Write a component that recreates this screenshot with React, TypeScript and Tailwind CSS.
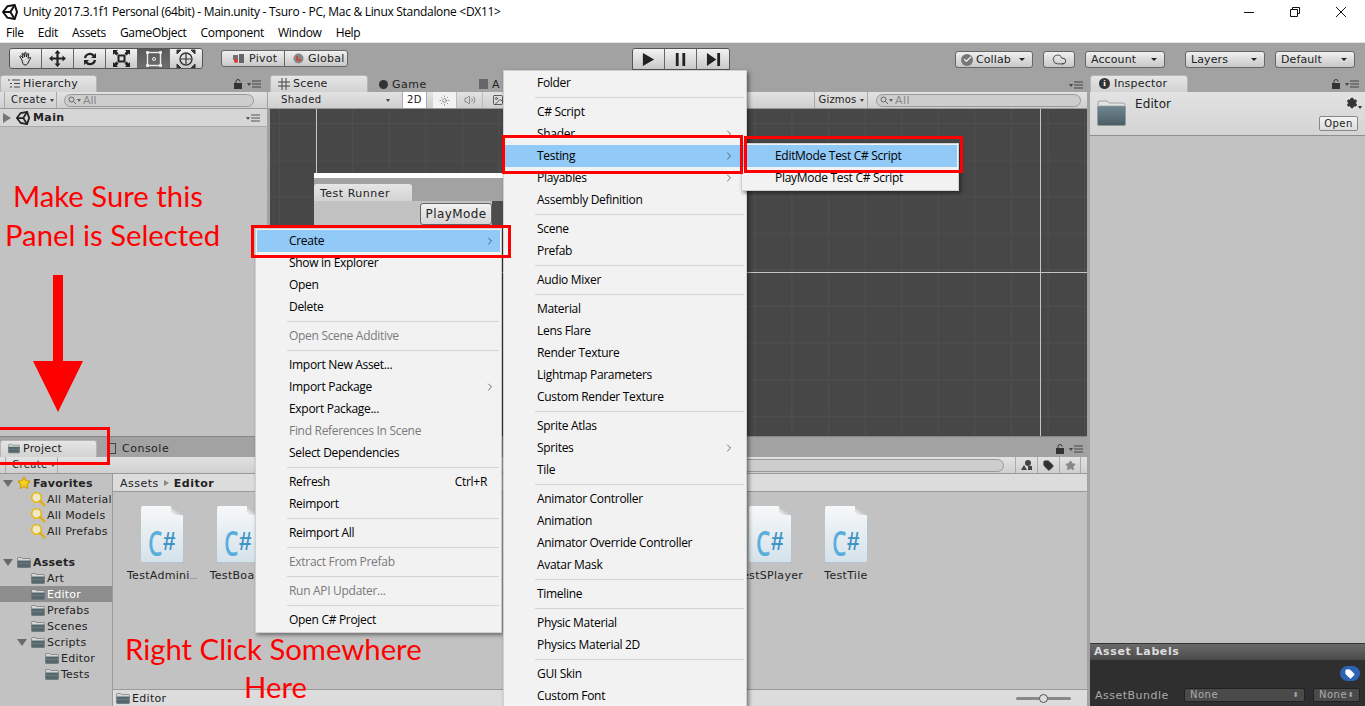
import React from "react";
import { Tag, Star, ChevronRight, Cloud, Check, Settings, Volume2, Sun, Image as ImageIcon } from "lucide-react";

const ui = "font-['DejaVu_Sans',sans-serif] text-[11px] leading-none text-[#222]";
const ui10 = "font-['DejaVu_Sans',sans-serif] text-[10px] leading-none text-[#222]";
const seg = "font-['Open_Sans',sans-serif] text-[12px] leading-none tracking-[-0.3px]";

function UnityLogo({ size = 15, color = "#222" }: { size?: number; color?: string }) {
  return (
    <svg width={size} height={size} viewBox="0 0 24 24" fill="none" stroke={color} strokeWidth="3" className="shrink-0">
      <path d="M8 3.500L19 1.500 22.500 12 19 22.500 8 20.500 1.500 12z" />
      <path d="M12.500 12H1.500M12.500 12L19 1.500M12.500 12L19 22.500" />
    </svg>
  );
}

function LockIcon() {
  return (
    <svg width="8" height="10" viewBox="0 0 8 10" className="mr-[2px]">
      <path d="M2 4V2.500a2 2 0 014 0" fill="none" stroke="#333" />
      <rect x="0" y="4" width="8" height="6" fill="#333" />
    </svg>
  );
}

function PanelMenu({ lock = false }: { lock?: boolean }) {
  return (
    <div className="flex items-center gap-[3px]">
      {lock && <LockIcon />}
      <svg width="15" height="8" viewBox="0 0 15 8">
        <path d="M0 3h4L2 6z" fill="#444" />
        <path d="M5 1h9M5 4h9M5 7h9" stroke="#444" strokeWidth="1" />
      </svg>
    </div>
  );
}

function Tab({ w, icon, label }: { w: string; icon: React.ReactNode; label: string }) {
  return (
    <div className={`${w} h-[17px] flex items-center gap-[3px] pl-[7px] pb-[1px] tracking-[0.2px] rounded-t-[3px] bg-gradient-to-b from-[#e6e6e6] to-[#d2d2d2] border-t border-x border-[#b5b5b5] ${ui}`}>
      {icon}
      <span>{label}</span>
    </div>
  );
}

function Folder({ size = 14 }: { size?: number }) {
  return (
    <svg width={size} height={size * 0.85} viewBox="0 0 14 12" className="shrink-0">
      <path d="M0.5 2.500a1 1 0 011-1h3l1 1h7a1 1 0 011 1V11a.7.7 0 01-.7.7H1.200a.7.7 0 01-.7-.7z" fill="#d6d8d8" stroke="#5a6468" strokeWidth=".6" />
      <rect x="0.5" y="4.500" width="13" height="7" rx=".6" fill="#56676d" />
      <path d="M0.5 7.500h13" stroke="#7b8a8f" strokeWidth=".6" />
    </svg>
  );
}

function BigFolder() {
  return (
    <svg width="29" height="26" viewBox="0 0 29 26" className="shrink-0">
      <defs>
        <linearGradient id="bf" x1="0" y1="0" x2="0" y2="1"><stop offset="0" stopColor="#6f8791" /><stop offset="1" stopColor="#4c5d64" /></linearGradient>
      </defs>
      <path d="M1 3a2 2 0 012-2h7l2 2h14a2 2 0 012 2v4H1z" fill="#e2e4e4" stroke="#9aa2a5" />
      <rect x="0.500" y="6" width="28" height="19.500" rx="1.500" fill="url(#bf)" stroke="#8d9599" strokeWidth=".6" />
    </svg>
  );
}

function SearchLens() {
  return (
    <svg width="16" height="16" viewBox="0 0 16 16" className="shrink-0">
      <circle cx="6.500" cy="6.500" r="4.800" fill="#efe9c8" stroke="#e6b90e" strokeWidth="1.600" />
      <path d="M10 10L14.500 14.500" stroke="#e0ae0c" strokeWidth="2.200" strokeLinecap="round" />
    </svg>
  );
}

function SearchField({ w, ml, mr }: { w: string; ml: string; mr?: string }) {
  return (
    <div className={`${w} ${ml} ${mr ?? ""} h-[13px] rounded-full border border-[#999] bg-[#cdcdcd] flex items-center pl-[3px] gap-[1px] text-[#888] font-['DejaVu_Sans',sans-serif] text-[11px] leading-none`}>
      <svg width="8" height="8" viewBox="0 0 8 8" fill="none" stroke="#666"><circle cx="3.500" cy="3.500" r="2.500" /><path d="M5.500 5.500L8 8" /></svg>
      <span className="w-0 h-0 border-x-[2px] border-x-transparent border-t-[3px] border-t-[#666]" />
      <span className="ml-[1px]">All</span>
    </div>
  );
}

function Tree({ indent, arrow, bold, selected, icon, label }: { indent: string; arrow?: boolean; bold?: boolean; selected?: boolean; icon: React.ReactNode; label: string }) {
  return (
    <div className={`h-[16px] flex items-center gap-[1px] tracking-[0.25px] relative ${indent} ${selected ? "bg-[#8e8e8e] text-white" : "text-[#222]"} ${bold ? "font-bold" : ""}`}>
      {arrow && <span className="absolute -ml-[13px] w-0 h-0 border-x-[5px] border-x-transparent border-t-[7px] border-t-[#6a6a6a]" />}
      <span className="w-[16px] shrink-0 flex justify-center">{icon}</span>
      <span className="whitespace-nowrap">{label}</span>
    </div>
  );
}

function ToolBtn({ children, active }: { children: React.ReactNode; active?: boolean }) {
  return <div className={`w-[32px] h-full flex items-center justify-center border-r border-[#666] last:border-r-0 ${active ? "bg-gradient-to-b from-[#5a5a5a] to-[#6e6e6e]" : "bg-gradient-to-b from-[#f2f2f2] to-[#c9c9c9]"}`}>{children}</div>;
}

function Drop({ w, ml, label, icon }: { w: string; ml: string; label: string; icon?: React.ReactNode }) {
  return (
    <div className={`${w} ${ml} h-[17px] mt-[8px] flex items-center pl-[5px] pr-[7px] rounded-[3px] border border-[#666] bg-gradient-to-b from-[#f0f0f0] to-[#c8c8c8] tracking-[0.1px] ${ui}`}>
      {icon}
      <span>{label}</span>
      <span className="ml-auto w-0 h-0 border-x-[3px] border-x-transparent border-t-[3px] border-t-[#222]" />
    </div>
  );
}

function CsFile({ name, tail }: { name: string; tail?: string }) {
  return (
    <div className="w-[76px] shrink-0 flex flex-col items-center">
      <div className="relative w-[43px] h-[57px] bg-gradient-to-b from-[#f6f8f9] to-[#d5e2ea] rounded-[2px] border-r border-b border-[#b8c4cc] overflow-hidden">
        <span className="absolute right-0 top-0 w-[12px] h-[9px] bg-gradient-to-bl from-[#c2c2c2] via-[#c2c2c2] to-[#fff]" />
        <span className="absolute left-[7px] top-[19px] font-['Open_Sans',sans-serif] font-semibold text-[35px] leading-none text-[#5aaedc] origin-left scale-x-[0.65]">C</span>
        <span className="absolute left-[22px] top-[23px] font-['Liberation_Sans',sans-serif] text-[25px] font-bold leading-none text-[#3f94c6] origin-left scale-x-90">#</span>
      </div>
      <span className={`${ui} mt-[7px] tracking-[0.3px] whitespace-nowrap`}>{name}{tail && <span className="text-[7px] tracking-0">{tail}</span>}</span>
    </div>
  );
}

type MI = { t?: string; sep?: boolean; sub?: boolean; dis?: boolean; hi?: boolean; key?: string };

function Menu({ items, pr, cls }: { items: MI[]; pr: string; cls: string }) {
  return (
    <div className={`absolute z-20 bg-[#f2f2f2] border border-[#d0d0d0] shadow-[2px_2px_4px_rgba(0,0,0,0.45)] p-[1px] overflow-hidden ${cls}`}>
      {items.map((m, i) =>
        m.sep ? (
          <div key={i} className="h-[7px] flex items-center pl-[30px] pr-[1px]"><div className="h-px w-full bg-[#d4d4d4]" /></div>
        ) : (
          <div key={i} className={`h-[22px] flex items-center whitespace-nowrap pl-[32px] ${pr} ${seg} ${m.hi ? "bg-[#91c9f7]" : ""} ${m.dis ? "text-[#7a7a7a]" : "text-black"}`}>
            <span>{m.t}</span>
            {m.key && <span className="ml-auto mr-[9px]">{m.key}</span>}
            {m.sub && <ChevronRight size={12} strokeWidth={1.4} color="#333" className="ml-auto" />}
          </div>
        )
      )}
    </div>
  );
}

const ctx: MI[] = [
  { t: "Create", sub: true, hi: true }, { t: "Show in Explorer" }, { t: "Open" }, { t: "Delete" }, { sep: true },
  { t: "Open Scene Additive", dis: true }, { sep: true },
  { t: "Import New Asset..." }, { t: "Import Package", sub: true }, { t: "Export Package..." }, { t: "Find References In Scene", dis: true }, { t: "Select Dependencies" }, { sep: true },
  { t: "Refresh", key: "Ctrl+R" }, { t: "Reimport" }, { sep: true }, { t: "Reimport All" }, { sep: true },
  { t: "Extract From Prefab", dis: true }, { sep: true }, { t: "Run API Updater...", dis: true }, { sep: true }, { t: "Open C# Project" },
];

const create: MI[] = [
  { t: "Folder" }, { sep: true }, { t: "C# Script" }, { t: "Shader", sub: true }, { t: "Testing", sub: true, hi: true }, { t: "Playables", sub: true }, { t: "Assembly Definition" }, { sep: true },
  { t: "Scene" }, { t: "Prefab" }, { sep: true }, { t: "Audio Mixer" }, { sep: true },
  { t: "Material" }, { t: "Lens Flare" }, { t: "Render Texture" }, { t: "Lightmap Parameters" }, { t: "Custom Render Texture" }, { sep: true },
  { t: "Sprite Atlas" }, { t: "Sprites", sub: true }, { t: "Tile" }, { sep: true },
  { t: "Animator Controller" }, { t: "Animation" }, { t: "Animator Override Controller" }, { t: "Avatar Mask" }, { sep: true },
  { t: "Timeline" }, { sep: true }, { t: "Physic Material" }, { t: "Physics Material 2D" }, { sep: true }, { t: "GUI Skin" }, { t: "Custom Font" },
];

const note = "absolute z-40 font-['Lato',sans-serif] text-[29.3px] leading-none text-[#f00] whitespace-nowrap";
const redBox = "absolute z-30 border-[3px] border-[#f00]";

export default function App() {
  return (
    <div className="relative w-[1365px] h-[706px] overflow-hidden bg-[#a2a2a2] flex flex-col">
      {/* title */}
      <div className={`h-[24px] bg-white flex items-center pl-[2px] text-black ${seg}`}>
        <UnityLogo size={16} color="#111" />
        <span className="ml-[5px]">Unity 2017.3.1f1 Personal (64bit) - Main.unity - Tsuro - PC, Mac &amp; Linux Standalone &lt;DX11&gt;</span>
        <div className="ml-auto flex items-center h-full">
          <svg width="12" height="12" viewBox="0 0 12 12" className="mr-[34px]"><path d="M1 6.500h10" stroke="#111" /></svg>
          <svg width="12" height="12" viewBox="0 0 12 12" className="mr-[34px]"><path d="M3.500 3V1.500h7v6H9M1.500 3.500h7v7h-7z" fill="none" stroke="#111" /></svg>
          <svg width="12" height="12" viewBox="0 0 12 12" className="mr-[18px]"><path d="M1 1l10 10M11 1L1 11" stroke="#111" /></svg>
        </div>
      </div>
      {/* menubar */}
      <div className={`h-[18px] bg-white flex items-center gap-[14px] pl-[6px] text-black ${seg}`}>
        {["File", "Edit", "Assets", "GameObject", "Component", "Window", "Help"].map((m) => <span key={m}>{m}</span>)}
      </div>
      {/* toolbar */}
      <div className="h-[28px] bg-[#a2a2a2] border-t border-[#e4e4e4] flex">
        <div className="ml-[9px] mt-[5px] h-[21px] flex rounded-[3px] border border-[#555] overflow-hidden">
          <ToolBtn><svg width="16" height="16" viewBox="0 0 16 16" fill="none" stroke="#222"><path d="M4 9L2 6c-.6-1 .7-1.600 1.300-.8L5 7 4 3c-.2-1 1.200-1.200 1.400-.3L6.600 6 6.700 2c0-1 1.400-1 1.400 0L8.400 6l1-3c.3-.9 1.500-.6 1.300.3L10 7.500c1-1 2.300-1.300 2.800-.8L10.500 11c-.6 1.600-1.500 3-3.500 3-2 0-2.400-2-3-5z" /></svg></ToolBtn>
          <ToolBtn><svg width="17" height="17" viewBox="0 0 17 17" fill="#222"><path d="M8.500 0l3 3.500H9.600v3.900h3.900V5.500L17 8.500l-3.500 3V9.600H9.600v3.900h1.900l-3 3.500-3-3.500h1.900V9.600H3.500v1.900L0 8.500l3.500-3v1.900h3.900V3.500H5.500z" /></svg></ToolBtn>
          <ToolBtn><svg width="16" height="16" viewBox="0 0 16 16" fill="none" stroke="#222" strokeWidth="2.200"><path d="M3 7a5 5 0 019-2M13 9a5 5 0 01-9 2" /><path d="M14 2v5H9zM2 14V9h5z" fill="#222" stroke="none" /></svg></ToolBtn>
          <ToolBtn><svg width="17" height="17" viewBox="0 0 17 17" fill="#222"><rect x="5.500" y="5.500" width="6" height="6" fill="none" stroke="#222" strokeWidth="2" /><path d="M0 0h5L3.600 1.400 5.500 3.300 3.300 5.500 1.400 3.600 0 5zM17 0v5l-1.400-1.400-1.900 1.900-2.200-2.200 1.900-1.900L12 0zM0 17v-5l1.400 1.400 1.900-1.900 2.200 2.200-1.900 1.900L5 17zM17 17h-5l1.400-1.400-1.900-1.900 2.200-2.200 1.900 1.900L17 12z" /></svg></ToolBtn>
          <ToolBtn active><svg width="18" height="18" viewBox="0 0 18 18" fill="none"><rect x="2.500" y="2.500" width="13" height="13" stroke="#eee" strokeWidth="1.400" /><rect x="1" y="1" width="3" height="3" rx="1" fill="#eee" /><rect x="14" y="1" width="3" height="3" rx="1" fill="#eee" /><rect x="1" y="14" width="3" height="3" rx="1" fill="#eee" /><rect x="14" y="14" width="3" height="3" rx="1" fill="#eee" /><circle cx="9" cy="9" r="1.500" stroke="#eee" /></svg></ToolBtn>
          <ToolBtn><svg width="20" height="20" viewBox="0 0 20 20" fill="none" stroke="#333"><circle cx="10" cy="10" r="6" strokeWidth="1.400" /><path d="M10 5v10M5 10h10" strokeWidth="1.200" /><path d="M1 1h4L1 5zM19 1h-4l4 4zM1 19h4l-4-4zM19 19h-4l4-4z" fill="#333" /></svg></ToolBtn>
        </div>
        <div className={`ml-[18px] mt-[7px] h-[17px] flex rounded-[3px] border border-[#666] bg-gradient-to-b from-[#f0f0f0] to-[#c8c8c8] tracking-[0.25px] ${ui}`}>
          <div className="w-[63px] flex items-center gap-[4px] pl-[11px] border-r border-[#666]">
            <svg width="12" height="10" viewBox="0 0 12 10"><rect x="0" y="1" width="5" height="5" fill="#7a6a6a" /><rect x="6" y="0" width="5" height="9" fill="#666" /><circle cx="3" cy="7" r="2" fill="#d33" /></svg>
            <span>Pivot</span>
          </div>
          <div className="w-[62px] flex items-center gap-[4px] pl-[8px]">
            <svg width="11" height="11" viewBox="0 0 11 11"><circle cx="5.500" cy="5.500" r="5" fill="#888" /><path d="M4 3v4h4" fill="none" stroke="#d33" strokeWidth="1.300" /></svg>
            <span>Global</span>
          </div>
        </div>
        <div className="ml-[284px] mt-[5px] h-[22px] flex rounded-t-[3px] border border-[#555] overflow-hidden">
          {["M2 1l12 7-12 7z", "M3 1h3v14H3zM10 1h3v14h-3z", "M1 1l10 7-10 7zM12 1h3v14h-3z"].map((d) => (
            <div key={d} className="w-[32px] h-full flex items-center justify-center border-r border-[#666] last:border-r-0 bg-gradient-to-b from-[#f2f2f2] to-[#c9c9c9]">
              <svg width="15" height="15" viewBox="0 0 16 16" fill="#222"><path d={d} /></svg>
            </div>
          ))}
        </div>
        <Drop w="w-[78px]" ml="ml-[225px]" label="Collab" icon={<span className="w-[12px] h-[12px] rounded-full bg-[#777] mr-[3px] flex items-center justify-center"><Check size={9} strokeWidth={3.5} color="#eee" /></span>} />
        <div className="w-[32px] ml-[10px] h-[17px] mt-[8px] flex items-center justify-center rounded-[3px] border border-[#666] bg-gradient-to-b from-[#f0f0f0] to-[#c8c8c8]"><Cloud size={15} strokeWidth={1.200} color="#222" /></div>
        <Drop w="w-[80px]" ml="ml-[10px]" label="Account" />
        <Drop w="w-[80px]" ml="ml-[20px]" label="Layers" />
        <Drop w="w-[80px]" ml="ml-[10px]" label="Default" />
      </div>
      {/* body */}
      <div className="flex-1 flex min-h-0 bg-[#a2a2a2]">
        <div className="w-[1087px] flex flex-col">
          {/* top half */}
          <div className="h-[366px] flex">
            {/* hierarchy */}
            <div className="w-[267px] flex flex-col">
              <div className="h-[22px] flex items-end justify-between pr-[5px]">
                <Tab w="w-[97px]" label="Hierarchy" icon={<svg width="12" height="9" viewBox="0 0 12 9" stroke="#444"><path d="M0 1h2M4 1h8M2 4.500h2M6 4.500h6M2 8h2M6 8h6" /></svg>} />
                <div className="pb-[3px]"><PanelMenu lock /></div>
              </div>
              <div className={`h-[17px] flex items-center bg-gradient-to-b from-[#e2e2e2] to-[#cfcfcf] border-b border-[#9a9a9a] ${ui10}`}>
                <span className="ml-[4px] w-[53px] pl-[6px] h-full flex items-center tracking-[0.4px] border-x border-[#aaa] gap-[3px]">Create<span className="w-0 h-0 border-x-[2px] border-x-transparent border-t-[3px] border-t-[#444]" /></span>
                <SearchField w="w-[190px]" ml="ml-[7px]" />
              </div>
              <div className={`h-[18px] flex items-center bg-[#d6d6d6] border-b border-[#aaa] pl-[3px] pr-[6px] font-bold tracking-[0.4px] ${ui}`}>
                <span className="w-0 h-0 border-y-[5px] border-y-transparent border-l-[8px] border-l-[#777] mr-[5px]" />
                <UnityLogo size={14} />
                <span className="ml-[3px]">Main</span>
                <svg className="ml-auto" width="15" height="8" viewBox="0 0 15 8"><path d="M0 3h4L2 6z" fill="#555" /><path d="M5 1h9M5 4h9M5 7h9" stroke="#555" /></svg>
              </div>
              <div className="flex-1 bg-[#c2c2c2]" />
            </div>
            {/* scene */}
            <div className="ml-[1px] flex-1 flex flex-col">
              <div className="h-[22px] flex items-end pr-[3px] pl-[2px]">
                <Tab w="w-[98px]" label="Scene" icon={<svg width="12" height="12" viewBox="0 0 12 12" stroke="#444"><path d="M4 0v12M8 0v12M0 4h12M0 8h12" /></svg>} />
                <div className={`ml-[4px] w-[100px] h-[16px] flex items-center gap-[4px] pl-[7px] tracking-[0.5px] ${ui}`}><span className="w-[9px] h-[9px] rounded-full bg-[#333]" />Game</div>
                <div className={`ml-[7px] h-[16px] flex items-center gap-[4px] ${ui}`}><span className="w-[9px] h-[10px] bg-[#666]" />A</div>
                <div className="ml-auto pb-[3px]"><PanelMenu /></div>
              </div>
              <div className={`h-[17px] flex items-center bg-gradient-to-b from-[#e2e2e2] to-[#cfcfcf] border-b border-[#9a9a9a] tracking-[0.5px] whitespace-nowrap ${ui10}`}>
                <div className="w-[127px] pl-[13px] flex items-center pr-[5px] h-full">Shaded<span className="ml-auto w-0 h-0 border-x-[2px] border-x-transparent border-t-[3px] border-t-[#444]" /></div>
                <div className="ml-[7px] w-[25px] h-full flex items-center justify-center bg-white border-x border-[#aaa]">2D</div>
                <div className="ml-[6px] w-[23px] h-full flex items-center justify-center bg-[#f2f2f2]"><Sun size={11} strokeWidth={1.200} color="#555" /></div>
                <div className="w-[27px] h-full flex items-center justify-center border-x border-[#bbb]"><Volume2 size={12} strokeWidth={1.200} color="#555" /></div>
                <div className="ml-[5px] w-[20px] h-full flex items-center justify-center"><ImageIcon size={12} strokeWidth={1.500} color="#333" /></div>
                <div className="ml-auto w-[54px] h-full flex items-center justify-center border-x border-[#aaa] gap-[3px] tracking-[0.2px]">Gizmos<span className="w-0 h-0 border-x-[2px] border-x-transparent border-t-[3px] border-t-[#444]" /></div>
                <SearchField w="w-[205px]" ml="ml-[8px]" mr="mr-[6px]" />
              </div>
              <div className="flex-1 bg-[#474747] ml-[2px] relative overflow-hidden">
                <svg className="absolute inset-0 w-full h-full">
                  <defs><pattern id="g" width="36.600" height="36.600" patternUnits="userSpaceOnUse" x="10" y="15"><path d="M36.600 0V36.600H0" fill="none" stroke="#555" /></pattern></defs>
                  <rect width="100%" height="100%" fill="url(#g)" />
                  <path d="M46.500 0V330M770.500 0V330M0 163.500H820" stroke="#c4c4c4" />
                </svg>
              </div>
            </div>
          </div>
          {/* project */}
          <div className="flex-1 flex flex-col min-h-0">
            <div className="h-[21px] flex items-end pr-[3px] border-t border-[#868686]">
              <Tab w="w-[97px]" label="Project" icon={<Folder size={12} />} />
              <div className={`ml-[10px] flex items-center h-[16px] pb-[1px] gap-[6px] tracking-[0.5px] ${ui}`}><span className="w-[9px] h-[11px] border border-[#444]" />Console</div>
              <div className="ml-auto pb-[3px]"><PanelMenu lock /></div>
            </div>
            <div className={`h-[17px] flex items-center bg-gradient-to-b from-[#e2e2e2] to-[#cfcfcf] border-b border-[#9a9a9a] ${ui10}`}>
              <span className="ml-[5px] w-[53px] pl-[6px] h-full flex items-center tracking-[0.4px] border-x border-[#aaa] gap-[3px]">Create<span className="w-0 h-0 border-x-[2px] border-x-transparent border-t-[3px] border-t-[#444]" /></span>
              <div className="ml-auto mr-[11px] w-[300px] h-[13px] rounded-full border border-[#999] bg-[#cdcdcd]" />
              <div className="flex h-full mr-[6px]">
                <span className="w-[22px] flex items-center justify-center border-l border-[#aaa]">
                  <svg width="12" height="11" viewBox="0 0 12 11" fill="#444"><path d="M0 10l3-5 3 5z" /><circle cx="7" cy="3" r="3" /><rect x="7" y="6" width="4" height="4" /></svg>
                </span>
                <span className="w-[22px] flex items-center justify-center border-l border-[#aaa]"><Tag size={11} fill="#333" stroke="#333" /></span>
                <span className="w-[22px] flex items-center justify-center border-x border-[#aaa]"><Star size={11} fill="#888" stroke="#888" /></span>
              </div>
            </div>
            <div className="flex-1 flex min-h-0">
              <div className={`w-[113px] bg-[#c2c2c2] pt-[1px] border-r border-[#9a9a9a] ${ui} overflow-hidden`}>
                <Tree indent="pl-[16px]" arrow bold icon={<Star size={14} fill="#f7d020" stroke="#d0a010" />} label="Favorites" />
                <Tree indent="pl-[30px]" icon={<SearchLens />} label="All Materials" />
                <Tree indent="pl-[30px]" icon={<SearchLens />} label="All Models" />
                <Tree indent="pl-[30px]" icon={<SearchLens />} label="All Prefabs" />
                <div className="h-[15px]" />
                <Tree indent="pl-[16px]" arrow bold icon={<Folder />} label="Assets" />
                <Tree indent="pl-[30px]" icon={<Folder />} label="Art" />
                <Tree indent="pl-[30px]" selected icon={<Folder />} label="Editor" />
                <Tree indent="pl-[30px]" icon={<Folder />} label="Prefabs" />
                <Tree indent="pl-[30px]" icon={<Folder />} label="Scenes" />
                <Tree indent="pl-[30px]" arrow icon={<Folder />} label="Scripts" />
                <Tree indent="pl-[44px]" icon={<Folder />} label="Editor" />
                <Tree indent="pl-[44px]" icon={<Folder />} label="Tests" />
              </div>
              <div className="flex-1 flex flex-col min-w-0 bg-[#c2c2c2]">
                <div className={`h-[18px] bg-[#dcdcdc] border-b border-[#9a9a9a] flex items-center pl-[7px] pt-[1px] gap-[5px] tracking-[0.5px] ${ui}`}>
                  <span>Assets</span><span className="w-0 h-0 border-y-[3px] border-y-transparent border-l-[5px] border-l-[#888]" /><span className="font-bold">Editor</span>
                </div>
                <div className="flex-1 flex pt-[14px] overflow-hidden">
                  <div className="flex ml-[11px]">
                    <CsFile name="TestAdmini" tail="…" />
                    <CsFile name="TestBoard" />
                    <div className="w-[456px] shrink-0" />
                    <CsFile name="TestSPlayer" />
                    <CsFile name="TestTile" />
                  </div>
                </div>
                <div className={`h-[17px] bg-[#dcdcdc] border-t border-[#9a9a9a] flex items-center pl-[3px] gap-[2px] tracking-[0.3px] ${ui}`}>
                  <Folder />
                  <span>Editor</span>
                  <div className="ml-auto mr-[16px] w-[55px] h-[3px] rounded-full bg-[#888] flex items-center justify-center"><span className="w-[9px] h-[9px] rounded-full bg-[#ddd] border border-[#555]" /></div>
                </div>
              </div>
            </div>
          </div>
        </div>
        {/* inspector */}
        <div className="w-[275px] ml-[3px] flex flex-col">
          <div className="h-[22px] flex items-end justify-between pr-[5px]">
            <Tab w="w-[98px]" label="Inspector" icon={<span className="w-[11px] h-[11px] rounded-full bg-[#333] text-white flex items-center justify-center font-['Liberation_Serif',serif] text-[9px] font-bold ml-[1px] mr-[1px]">i</span>} />
            <div className="pb-[3px]"><PanelMenu lock /></div>
          </div>
          <div className={`h-[44px] bg-gradient-to-b from-[#e2e2e2] to-[#d4d4d4] border-b border-[#8e8e8e] flex ${ui}`}>
            <div className="ml-[7px] mt-[8px]"><BigFolder /></div>
            <span className="ml-[9px] mt-[6px] text-[12px] tracking-[0.1px]">Editor</span>
            <div className="ml-auto pr-[7px] pt-[5px] flex flex-col items-end">
              <div className="flex items-end -mr-[4px]">
                <Settings size={12} fill="#333" stroke="#333" />
                <span className="w-0 h-0 border-x-[2px] border-x-transparent border-t-[3px] border-t-[#333]" />
              </div>
              <span className={`mt-[7px] h-[15px] w-[39px] border border-[#888] rounded-[2px] bg-gradient-to-b from-[#f4f4f4] to-[#dcdcdc] flex items-center justify-center tracking-[0.5px] ${ui10}`}>Open</span>
            </div>
          </div>
          <div className="flex-1 bg-[#c2c2c2]" />
          <div className="h-[17px] bg-gradient-to-b from-[#6a6a6a] to-[#4a4a4a] border-t border-[#333] flex items-center pl-[4px] font-bold tracking-[0.6px] font-['DejaVu_Sans',sans-serif] text-[11px] text-[#ddd]">Asset Labels</div>
          <div className="h-[46px] bg-[#2f2f2f] flex flex-col">
            <div className="flex justify-end pr-[5px] pt-[6px]">
              <span className="w-[20px] h-[15px] rounded-full bg-[#2d62b5] flex items-center justify-center"><Tag size={10} fill="#fff" stroke="#fff" /></span>
            </div>
            <div className="mt-[7px] flex items-center pl-[5px] font-['DejaVu_Sans',sans-serif] text-[11px] leading-none text-[#aaa] tracking-[0.5px]">
              <span className="w-[89px]">AssetBundle</span>
              <span className="w-[121px] h-[14px] rounded-[2px] bg-[#4a4a4a] border border-[#222] pl-[5px] text-[10px] flex items-center justify-between pr-[5px]">None<span className="text-[7px]">⬍</span></span>
              <span className="ml-[8px] w-[47px] h-[14px] rounded-[2px] bg-[#4a4a4a] border border-[#222] pl-[5px] text-[10px] flex items-center justify-between pr-[5px]">None<span className="text-[7px]">⬍</span></span>
            </div>
          </div>
        </div>
      </div>

      {/* floating Test Runner window */}
      <div className="absolute z-10 left-[314px] top-[173px] w-[189px] h-[53px] bg-[#a2a2a2] border-t-[5px] border-white">
        <div className={`mt-[6px] w-[98px] h-[17px] pl-[6px] pt-[1px] flex items-center rounded-t-[3px] bg-gradient-to-b from-[#e6e6e6] to-[#d2d2d2] tracking-[0.5px] ${ui}`}>Test Runner</div>
        <div className="h-[25px] bg-[#c2c2c2] relative">
          <div className="absolute left-[106px] top-[2px] w-[72px] h-[22px] bg-gradient-to-b from-[#f2f2f2] to-[#d5d5d5] border border-[#666] rounded-[3px] flex items-center justify-center tracking-[0.4px] font-['DejaVu_Sans',sans-serif] text-[12px] text-[#222]">PlayMode</div>
          <div className="absolute left-[178px] top-0 w-[11px] h-full bg-[#4c4c4c]" />
        </div>
      </div>

      <Menu items={ctx} pr="pr-[4px]" cls="left-[255px] top-[228px] w-[247px]" />
      <Menu items={create} pr="pr-[10px]" cls="left-[503px] top-[70px] w-[244px] h-[660px]" />
      <Menu items={[{ t: "EditMode Test C# Script", hi: true }, { t: "PlayMode Test C# Script" }]} pr="pr-[4px]" cls="left-[741px] top-[143px] w-[218px]" />

      <div className={`${redBox} left-[251px] top-[225px] w-[260px] h-[33px]`} />
      <div className={`${redBox} left-[502px] top-[135px] w-[241px] h-[39px]`} />
      <div className={`${redBox} left-[744px] top-[136px] w-[219px] h-[37px]`} />
      <div className={`${redBox} -left-[3px] top-[427px] w-[113px] h-[38px]`} />

      <span className={`${note} left-[13px] top-[181px]`}>Make Sure this</span>
      <span className={`${note} left-[5px] top-[220px]`}>Panel is Selected</span>
      <span className={`${note} left-[125px] top-[634px]`}>Right Click Somewhere</span>
      <span className={`${note} left-[244px] top-[672px]`}>Here</span>
      <svg className="absolute z-40 left-[33px] top-[275px]" width="50" height="137" viewBox="0 0 50 137">
        <path d="M20 0h10v86h20L25 137 0 86h20z" fill="#f00" />
      </svg>
    </div>
  );
}
